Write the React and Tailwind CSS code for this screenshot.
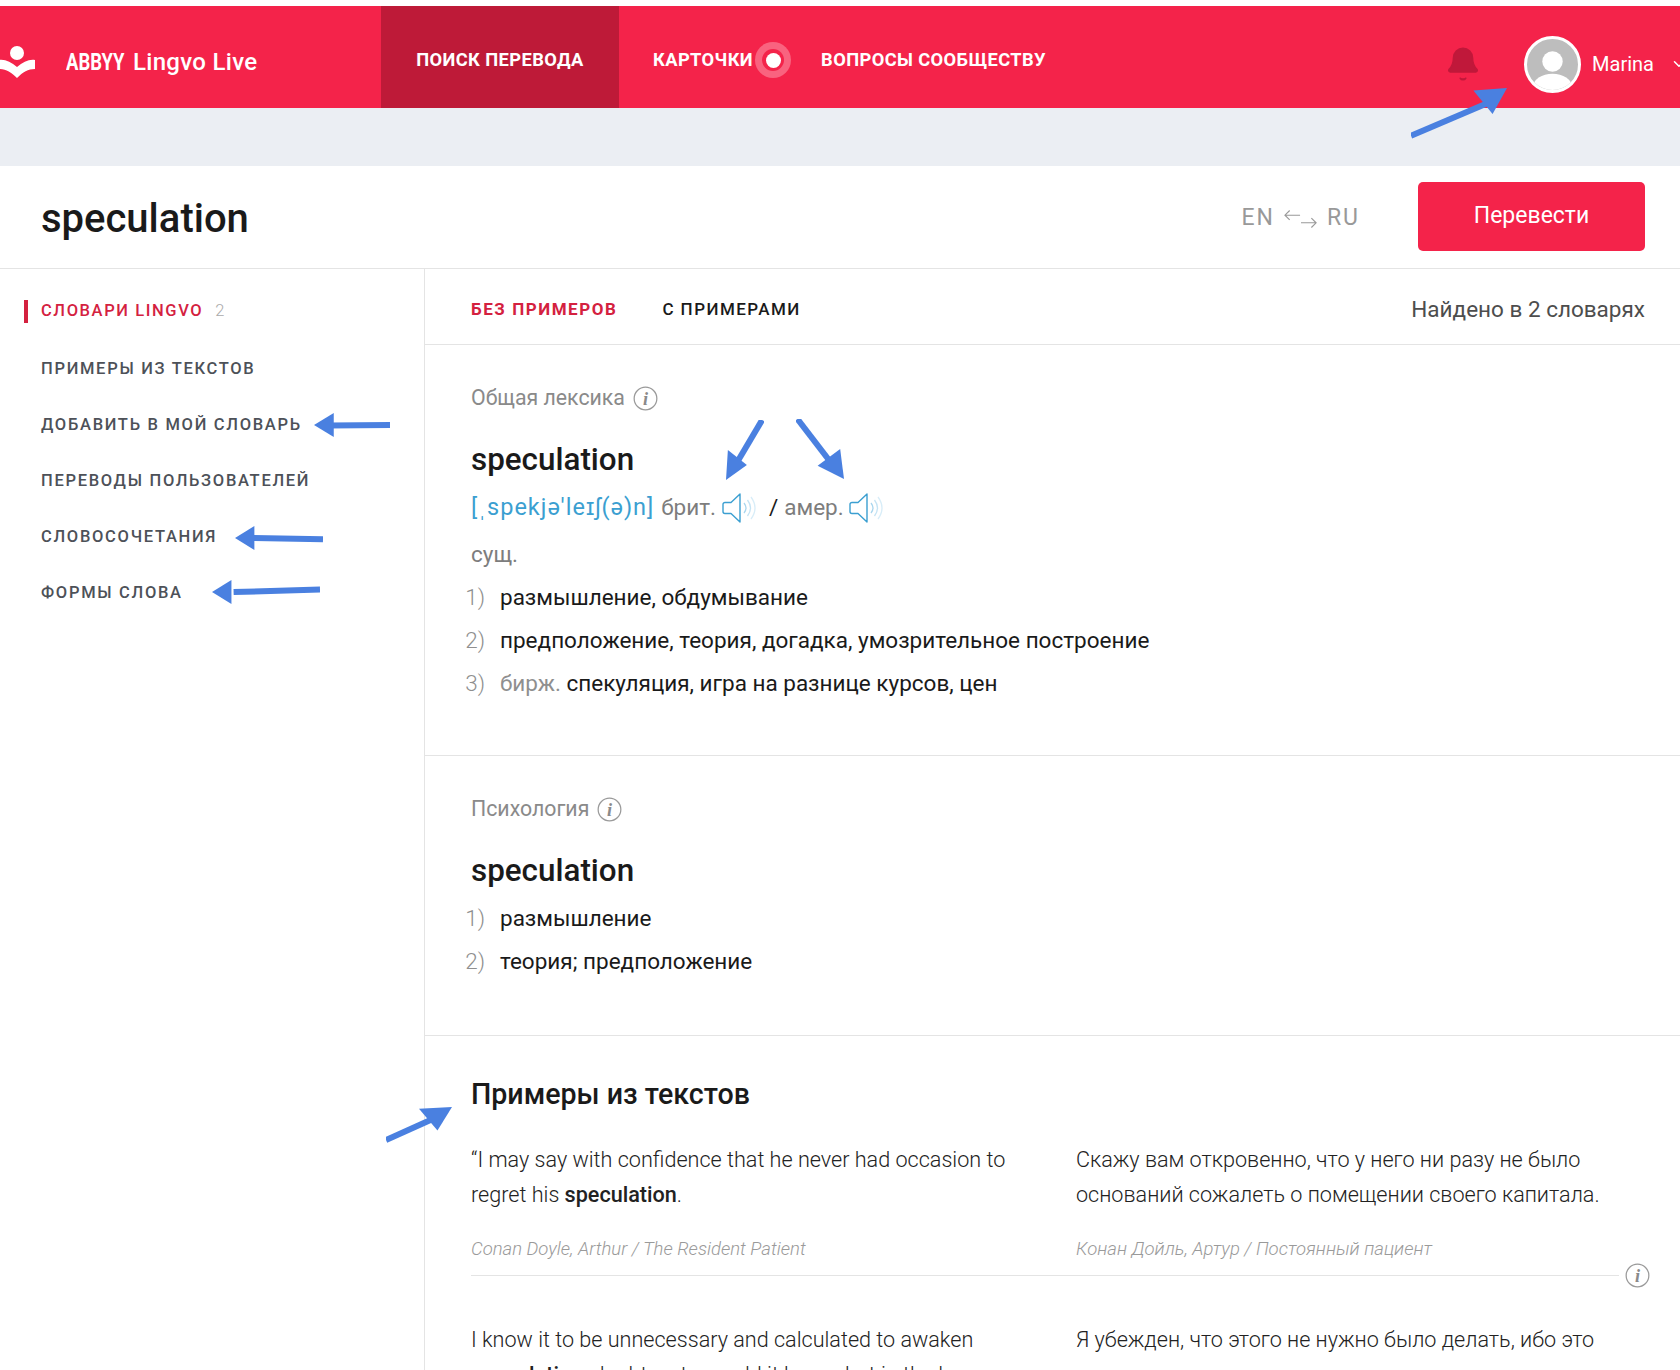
import { Bell, ChevronDown } from 'lucide-react';

const sideItems = ['Примеры из текстов', 'Добавить в мой словарь', 'Переводы пользователей', 'Словосочетания', 'Формы слова'];

function Info({ className = '' }) {
  return (
    <svg viewBox="0 0 26 26" className={`w-[25px] h-[25px] shrink-0 ${className}`}>
      <circle cx="13" cy="13" r="11.8" fill="none" stroke="#9a9a9a" strokeWidth="1.3" />
      <text x="13" y="19.5" textAnchor="middle" fontFamily="Liberation Serif, serif" fontStyle="italic" fontWeight="700" fontSize="19" fill="#8a8a8a">i</text>
    </svg>
  );
}

function Speaker() {
  return (
    <svg viewBox="0 0 38 32" className="w-[38px] h-[32px] shrink-0">
      <path d="M10 10.5 19 2V30L10 21.5H4a2 2 0 0 1-2-2v-7a2 2 0 0 1 2-2Z" fill="none" stroke="#3b9fd1" strokeWidth="1.4" strokeLinejoin="round" />
      <path d="M23 11q4 5 0 10" fill="none" stroke="#a9d6ee" strokeWidth="1.3" />
      <path d="M26.5 8q6 8 0 16" fill="none" stroke="#c4e3f4" strokeWidth="1.3" />
      <path d="M30 5q8 11 0 22" fill="none" stroke="#d8edf8" strokeWidth="1.3" />
    </svg>
  );
}

function Arrow({ className, d, head }) {
  return (
    <svg className={`absolute pointer-events-none ${className}`} viewBox="0 0 100 100" preserveAspectRatio="none">
      <path d={d} fill="none" stroke="#4a80e0" strokeWidth="6" vectorEffect="non-scaling-stroke" />
      <path d={head} fill="#4a80e0" />
    </svg>
  );
}

function Numbered({ n, children }) {
  return (
    <li className="flex h-[43px] items-center">
      <span className="w-[20px] shrink-0 text-[#8f8f8f] font-light text-right">{n})</span>
      <span className="ml-[15px] text-[#1a1a1a]">{children}</span>
    </li>
  );
}

function Example({ en, ru, enAuthor, ruAuthor }) {
  return (
    <div className="grid grid-cols-[605px_1fr] pr-[35px] text-[21.6px]">
      <div className="w-[560px]">
        <p className="leading-[35px] text-[#222222] font-light">{en}</p>
        {enAuthor && <p className="mt-[24px] text-[18.5px] italic font-light text-[#9a9a9a]">{enAuthor}</p>}
      </div>
      <div>
        <p className="leading-[35px] text-[#222222] font-light">{ru}</p>
        {ruAuthor && <p className="mt-[24px] text-[18.5px] italic font-light text-[#9a9a9a]">{ruAuthor}</p>}
      </div>
    </div>
  );
}

export default function App() {
  return (
    <div className="relative h-[1370px] overflow-hidden bg-white pt-[6px] font-['Roboto',sans-serif] text-[22.5px]">
      <header className="flex h-[102px] items-stretch bg-[#f4234a] text-white">
        <div className="flex w-[381px] items-center pt-[10px]">
          <svg viewBox="0 0 36 34" className="ml-[-1px] w-[36px] h-[34px]">
            <circle cx="18" cy="8" r="7" fill="#fff" />
            <path d="M0 15c6-1 12 2 18 7 6-5 12-8 18-7v9c-7 0-12 3-18 9-6-6-11-9-18-9Z" fill="#fff" />
          </svg>
          <span className="ml-[31px] flex items-baseline whitespace-nowrap text-[24px]">
            <span className="inline-block w-[67px] origin-left scale-x-[.77] font-bold">ABBYY</span>
            <span className="font-medium tracking-[.3px]">Lingvo Live</span>
          </span>
        </div>
        <nav className="flex items-stretch text-[18.3px] font-bold tracking-[.4px]">
          <a className="flex w-[238px] items-center justify-center bg-[#be1a38] pt-[6px]">ПОИСК ПЕРЕВОДА</a>
          <a className="ml-[34px] flex items-center pt-[6px]">
            КАРТОЧКИ
            <span className="ml-[2px] flex h-[36px] w-[36px] items-center justify-center rounded-full bg-[#f9637f]">
              <span className="flex h-[22px] w-[22px] items-center justify-center rounded-full bg-[#f4234a]">
                <span className="h-[15px] w-[15px] rounded-full bg-white" />
              </span>
            </span>
          </a>
          <a className="ml-[30px] flex items-center pt-[6px]">ВОПРОСЫ СООБЩЕСТВУ</a>
        </nav>
        <div className="ml-auto flex items-center pt-[14px]">
          <Bell className="w-[38px] h-[40px] text-[#c0183a]" fill="#c0183a" strokeWidth={1} />
          <div className="ml-[42px] flex h-[57px] w-[57px] items-center justify-center overflow-hidden rounded-full border-[3px] border-white bg-[#bdbdbd]">
            <svg viewBox="0 0 50 50" className="w-full h-full">
              <circle cx="25" cy="22" r="10" fill="#fff" />
              <ellipse cx="25" cy="47" rx="19" ry="13" fill="#fff" />
            </svg>
          </div>
          <span className="ml-[11px] text-[20px]">Marina</span>
          <ChevronDown className="ml-[16px] mr-[-8px] w-[18px] h-[18px] shrink-0" />
        </div>
      </header>

      <div className="h-[58px] bg-[#ebeef3]" />

      <div className="flex h-[103px] items-center border-b border-[#e4e4e4] pl-[41px] pr-[35px]">
        <h1 className="pt-[3px] text-[40px] font-medium text-[#1a1a1a]">speculation</h1>
        <div className="ml-auto flex items-center pt-[3px] text-[23px] tracking-[2px] text-[#999999]">
          EN
          <svg viewBox="0 0 36 20" className="mx-[9px] w-[34px] h-[20px]">
            <path d="M1 6h16M6 1 1 6l5 5M18 14h16M29 9l5 5-5 5" fill="none" stroke="#999" strokeWidth="1.2" />
          </svg>
          RU
        </div>
        <button className="ml-[58px] -mt-[2px] h-[69px] w-[227px] rounded-[5px] bg-[#f4234a] text-[23px] text-white">Перевести</button>
      </div>

      <div className="flex">
        <aside className="w-[425px] shrink-0 border-r border-[#e4e4e4] pt-[13px] text-[16.5px] font-medium">
          <div className="flex h-[59px] items-center tracking-[1.6px]">
            <span className="ml-[24px] h-[23px] w-[4px] bg-[#d4213f]" />
            <span className="ml-[13px] text-[#d4213f]">СЛОВАРИ LINGVO</span>
            <span className="ml-[12px] font-light text-[#aaaaaa]">2</span>
          </div>
          {sideItems.map(item => (
            <div key={item} className="flex h-[56px] items-center pl-[41px] uppercase tracking-[1.7px] text-[#4d5158]">{item}</div>
          ))}
        </aside>

        <main className="min-w-0 flex-1">
          <div className="flex h-[76px] items-center border-b border-[#e4e4e4] pl-[46px] pr-[35px] pt-[7px]">
            <span className="text-[17px] font-bold tracking-[1.55px] text-[#d4213f]">БЕЗ ПРИМЕРОВ</span>
            <span className="ml-[45px] text-[17px] font-medium tracking-[1.45px] text-[#1a1a1a]">С ПРИМЕРАМИ</span>
            <span className="ml-auto text-[#4d4d4d]">Найдено в 2 словарях</span>
          </div>

          <section className="h-[411px] border-b border-[#e4e4e4] pl-[46px] pt-[39px]">
            <div className="flex h-[28px] items-center gap-[8px] text-[21.3px] text-[#8a8a8a]">Общая лексика <Info /></div>
            <h2 className="mt-[24px] text-[31.4px] font-medium text-[#1a1a1a]">speculation</h2>
            <div className="mt-[7px] flex h-[36px] items-center text-[#7d7d7d]">
              <span className="text-[23.5px] tracking-[1px] text-[#3b9fd1]">[ˌspekjə'leɪʃ(ə)n]</span>
              <span className="ml-[7px]">брит.</span>
              <span className="ml-[5px]"><Speaker /></span>
              <span className="ml-[10px] text-[#1a1a1a]">/</span>
              <span className="ml-[6px]">амер.</span>
              <span className="ml-[4px]"><Speaker /></span>
            </div>
            <p className="mt-[12px] text-[#7d7d7d]">сущ.</p>
            <ol className="mt-[5px] -ml-[6px]">
              <Numbered n={1}>размышление, обдумывание</Numbered>
              <Numbered n={2}>предположение, теория, догадка, умозрительное построение</Numbered>
              <Numbered n={3}><span className="text-[#8f8f8f]">бирж.</span> спекуляция, игра на разнице курсов, цен</Numbered>
            </ol>
          </section>

          <section className="h-[280px] border-b border-[#e4e4e4] pl-[46px] pt-[39px]">
            <div className="flex h-[28px] items-center gap-[8px] text-[21.3px] text-[#8a8a8a]">Психология <Info /></div>
            <h2 className="mt-[24px] text-[31.4px] font-medium text-[#1a1a1a]">speculation</h2>
            <ol className="mt-[3px] -ml-[6px]">
              <Numbered n={1}>размышление</Numbered>
              <Numbered n={2}>теория; предположение</Numbered>
            </ol>
          </section>

          <section className="pl-[46px] pt-[37px]">
            <h3 className="text-[28.6px] font-medium text-[#1a1a1a]">Примеры из текстов</h3>
            <div className="mt-[26px]">
              <Example
                en={<>“I may say with confidence that he never had occasion to regret his <b className="font-medium">speculation</b>.</>}
                ru="Скажу вам откровенно, что у него ни разу не было оснований сожалеть о помещении своего капитала."
                enAuthor="Conan Doyle, Arthur / The Resident Patient"
                ruAuthor="Конан Дойль, Артур / Постоянный пациент"
              />
            </div>
            <div className="-mt-[1px] flex items-center pr-[30px]">
              <div className="h-px flex-1 bg-[#e4e4e4]" />
              <Info className="ml-[6px]" />
            </div>
            <div className="mt-[34px]">
              <Example
                en={<>I know it to be unnecessary and calculated to awaken <b className="font-medium">speculation</b>, doubt as to would it be so, but in the long</>}
                ru="Я убежден, что этого не нужно было делать, ибо это могло только вызвать толки"
              />
            </div>
          </section>
        </main>
      </div>

      <Arrow className="left-[1411px] top-[88px] w-[96px] h-[52px]" d="M0 92 L85 25" head="M100 0 L65 5 L85 50 Z" />
      <Arrow className="left-[314px] top-[413px] w-[76px] h-[24px]" d="M100 50 L20 52" head="M0 50 L26 0 L26 100 Z" />
      <Arrow className="left-[235px] top-[526px] w-[88px] h-[24px]" d="M100 55 L20 50" head="M0 50 L22 0 L22 100 Z" />
      <Arrow className="left-[212px] top-[580px] w-[108px] h-[24px]" d="M100 40 L20 50" head="M0 50 L18 0 L18 100 Z" />
      <Arrow className="left-[726px] top-[420px] w-[38px] h-[60px]" d="M95 0 L25 75" head="M0 100 L5 50 L55 75 Z" />
      <Arrow className="left-[796px] top-[419px] w-[48px] h-[60px]" d="M3 0 L75 75" head="M100 100 L45 78 L92 50 Z" />
      <Arrow className="left-[386px] top-[1107px] w-[66px] h-[36px]" d="M0 92 L75 30" head="M100 0 L50 5 L78 65 Z" />
    </div>
  );
}
